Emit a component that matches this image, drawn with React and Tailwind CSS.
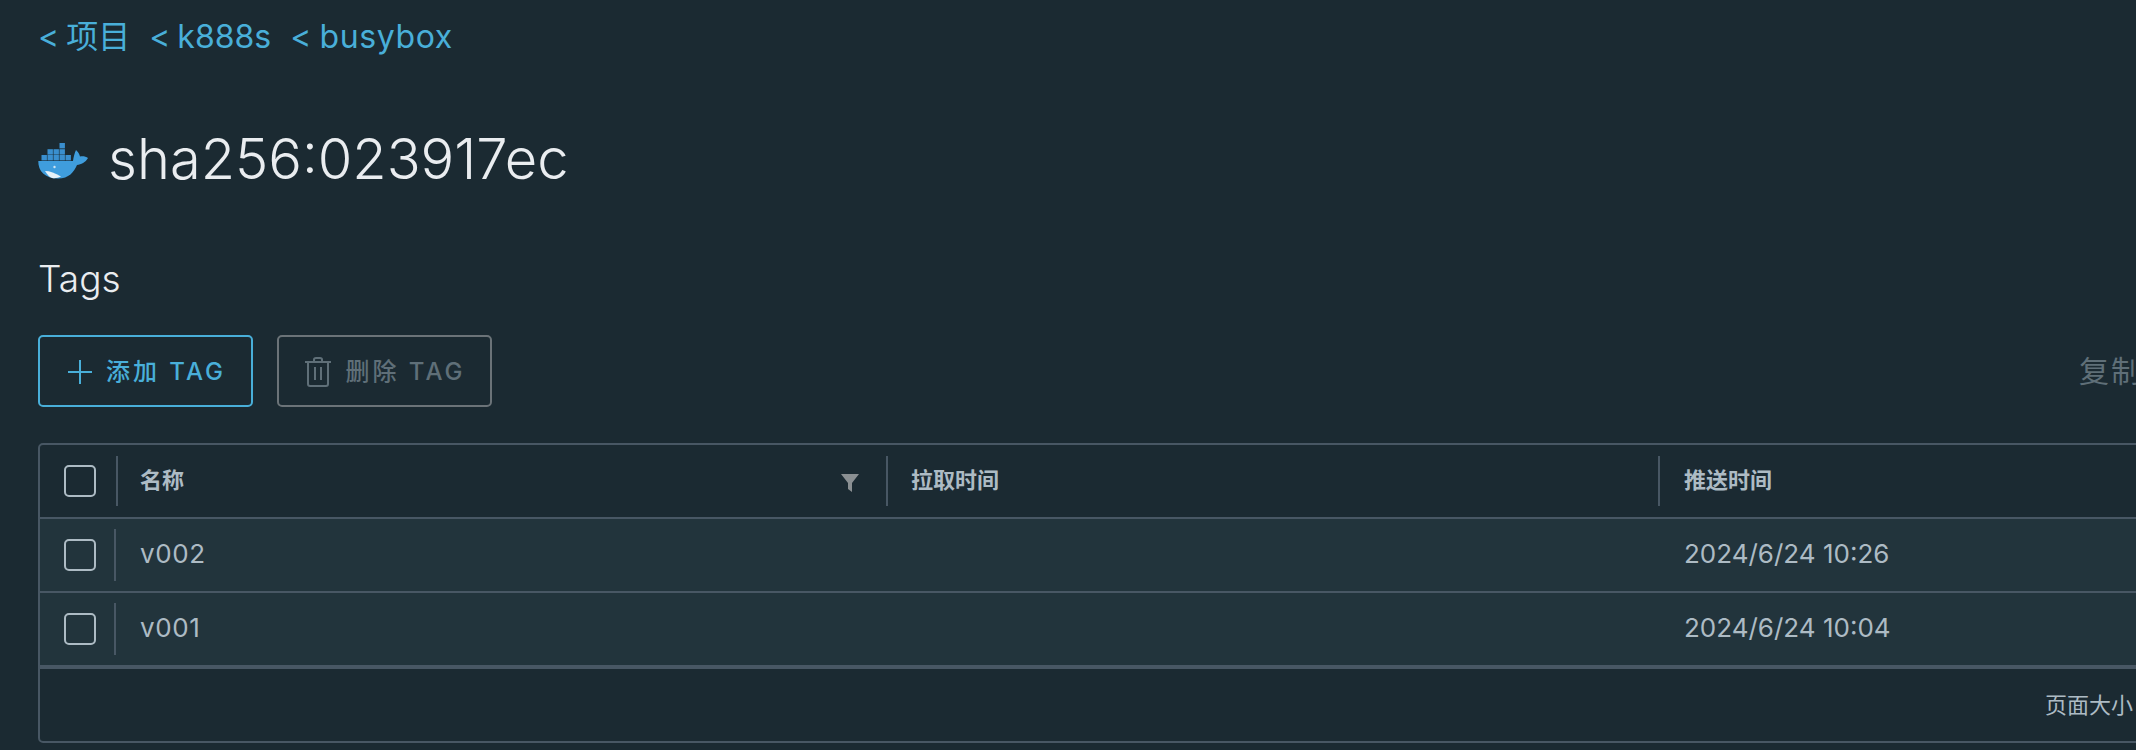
import React from "react";

const font = { fontFamily: '"Inter", "Noto Sans CJK SC", sans-serif' };

function DockerLogo() {
  const boxes = [
    [21.5, 0], [15.5, 6.2], [21.5, 6.2], [9.5, 6.2],
    [3.5, 12], [9.5, 12], [15.5, 12], [21.5, 12], [27.5, 12],
  ];
  return (
    <svg width="50" height="36" viewBox="0 0 50 36" className="mt-[3px] shrink-0">
      {boxes.map(([x, y]) => (
        <rect key={`${x}-${y}`} x={x} y={y} width="5.4" height="5.4" fill="#3a8fcf" />
      ))}
      <path
        d="M0.3 18 H35 C35.5 14 36.5 10 38 7 C40 9 41.5 11 42 13.5 C45 13 48 13.5 50 15 C47.5 19.5 43 21.5 39 22 C36 29 31 35.5 20 35.5 C7 35.5 0 28 0.3 18 Z"
        fill="#3f9ddd"
      />
      <path d="M7 28 C12 28 17 30 23 33.5 C20 35 17 35.5 14 35 C11 34 9 31 7 28 Z" fill="#e6f1f8" />
      <circle cx="16.5" cy="24" r="1.2" fill="#cfe4f2" />
    </svg>
  );
}

function Checkbox() {
  return <div className="h-[32px] w-[32px] shrink-0 rounded-[5px] border-2 border-[#adbbc4]" />;
}

function Sep({ header }) {
  return <div className={`w-[2px] bg-[#485764] ${header ? "h-[50px]" : "h-[52px]"}`} />;
}

function Row({ name, pushed }) {
  return (
    <div className="flex h-[74px] items-center border-t-2 border-[#485764] bg-[#22343c] text-[26px] text-[#adbbc4]">
      <div className="flex w-[76px] shrink-0 items-center pl-[24px]">
        <Checkbox />
        <div className="ml-[18px]"><Sep /></div>
      </div>
      <div className="w-[766px] shrink-0 pl-[24px] pb-[4px] tracking-[0.6px]">{name}</div>
      <div className="w-[778px] shrink-0" />
      <div className="pl-[24px] pb-[4px] whitespace-nowrap">{pushed}</div>
    </div>
  );
}

export default function App() {
  return (
    <div style={font} className="h-[750px] w-[2136px] overflow-hidden bg-[#1b2a32]">
      <div className="w-[2400px] pl-[38px]">
        <div className="flex h-[74px] items-center gap-[19px] text-[32px] text-[#49afd9] [word-spacing:-2px]">
          <span>&lt; 项目</span>
          <span>&lt; k888s</span>
          <span className="tracking-[0.6px]">&lt; busybox</span>
        </div>

        <div className="mt-[49px] flex h-[72px] items-center gap-[20px]">
          <DockerLogo />
          <h1 className="text-[56px] font-light text-[#eaedf0]">sha256:023917ec</h1>
        </div>

        <div className="mt-[60px] text-[37px] font-light leading-[48px] text-[#eaedf0]">Tags</div>

        <div className="mt-[32px] flex h-[72px] items-center">
          <button className="flex h-[72px] w-[215px] items-center justify-center gap-[14px] rounded-[5px] border-2 border-[#49afd9] pt-[1px] pl-[3px] text-[24px] font-medium text-[#49afd9]">
            <svg width="24" height="24" viewBox="0 0 24 24" fill="none" stroke="currentColor" strokeWidth="2">
              <path d="M12 0V24M0 12H24" />
            </svg>
            <span className="tracking-[3px]">添加 TAG</span>
          </button>
          <button className="ml-[24px] flex h-[72px] w-[215px] items-center justify-center gap-[14px] rounded-[5px] border-2 border-[#6b7378] pt-[1px] pl-[2px] text-[24px] font-medium text-[#5f6f78]">
            <svg width="26" height="30" viewBox="0 0 26 30" fill="none" stroke="currentColor" strokeWidth="2">
              <path d="M0 5H26M9 5V2.5C9 1.5 10 1 11 1H15C16 1 17 1.5 17 2.5V5M3 5V27C3 28 4 29 5 29H21C22 29 23 28 23 27V5M10 10V23M16 10V23" />
            </svg>
            <span className="tracking-[3px]">删除 TAG</span>
          </button>
          <span className="ml-[1587px] text-[30px] tracking-[2px] text-[#5f6f78]">复制</span>
        </div>

        <div className="mt-[36px] h-[300px] rounded-[5px] border-2 border-[#485764]">
          <div className="flex h-[72px] items-center text-[22px] font-bold text-[#adbbc4]">
            <div className="flex w-[78px] shrink-0 items-center pl-[24px]">
              <Checkbox />
              <div className="ml-[20px]"><Sep header /></div>
            </div>
            <div className="flex w-[768px] shrink-0 items-center justify-between pl-[22px] pr-[27px]">
              <span className="pb-[2px]">名称</span>
              <svg width="18" height="18" viewBox="0 0 18 18" className="mt-[4px]">
                <path d="M0 0H18L11 9V18L7 15V9Z" fill="#8a8f92" />
              </svg>
            </div>
            <Sep header />
            <div className="w-[770px] shrink-0 pl-[23px] pb-[2px]">拉取时间</div>
            <Sep header />
            <div className="pl-[24px] pb-[2px]">推送时间</div>
          </div>
          <Row name="v002" pushed="2024/6/24 10:26" />
          <Row name="v001" pushed="2024/6/24 10:04" />
          <div className="flex h-[78px] items-center border-t-4 border-[#485764] pb-[2px] text-[22px] text-[#adbbc4]">
            <span className="ml-[2005px] whitespace-nowrap">页面大小</span>
          </div>
        </div>
      </div>
    </div>
  );
}
